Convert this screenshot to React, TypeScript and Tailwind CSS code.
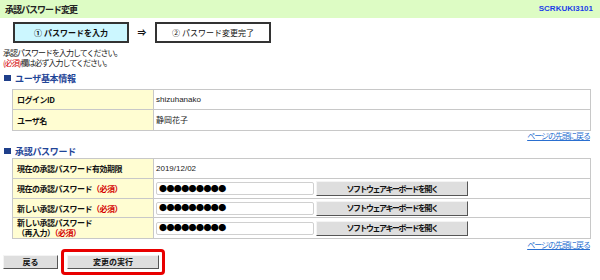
const font = { fontFamily: '"Noto Sans CJK JP", "Noto Sans", sans-serif' };
const latin = { fontFamily: '"Liberation Sans", "Noto Sans CJK JP", sans-serif' };

function Req() {
  return <span className="text-[#d40000]">（必須）</span>;
}

function SectionTitle({ children }: { children: React.ReactNode }) {
  return (
    <div className="flex h-[10px] items-center gap-[4px] pl-[4px] text-[9px] font-bold leading-none tracking-[-0.3px] text-[#1f4597]">
      <span className="inline-block h-[6px] w-[7px] bg-[#1f3f8a]" />
      {children}
    </div>
  );
}

function TopLink() {
  return (
    <div className="flex h-[9px] items-center justify-end pr-[10px] text-[8px] leading-none tracking-[-1px] text-[#2a6fd0] underline">
      ページの先頭に戻る
    </div>
  );
}

function Row({ label, children, h = "h-[20px]" }: { label: React.ReactNode; children: React.ReactNode; h?: string }) {
  return (
    <div className={`flex ${h} border-b border-[#c8c8c8] last:border-b-0`}>
      <div className="flex w-[141px] shrink-0 items-center border-r border-[#c8c8c8] bg-[#fffdd2] pl-[4px] text-[8px] font-bold leading-[9px] tracking-[-0.5px] text-[#111]">
        {label}
      </div>
      <div className="flex flex-1 items-center pl-[2px] text-[8px] text-[#222]">{children}</div>
    </div>
  );
}

function PwInput() {
  return (
    <div className="flex items-center gap-[2px]">
      <div className="flex h-[13px] w-[158px] items-center rounded-[2px] border border-[#d0d0d0] bg-white pl-[2px] text-[8px] leading-none tracking-[-0.6px] text-black">
        ●●●●●●●●●
      </div>
      <div className="flex h-[15px] w-[152px] items-center justify-center border border-[#f4f4f4] border-b-[#555] border-r-[#555] bg-[#dedede] text-[8px] font-bold leading-none tracking-[-1.5px] text-[#111]">
        ソフトウェアキーボードを開く
      </div>
    </div>
  );
}

export default function App() {
  return (
    <div className="h-[280px] w-[600px] overflow-hidden bg-white text-[#111]" style={font}>
      <div className="flex h-[18px] items-center justify-between bg-[#ddfcc4] px-[5px]">
        <span className="text-[9px] font-bold leading-none tracking-[-1px] text-[#222]">承認パスワード変更</span>
        <span className="pr-[2px] text-[8px] font-bold leading-none text-[#1b3ee8]" style={latin}>
          SCRKUKI3101
        </span>
      </div>

      <div className="mt-[4px] flex items-center pl-[13px]">
        <div className="flex h-[21px] w-[116px] items-center justify-center border-2 border-[#333] bg-[#ccf7ff] text-[8px] font-bold leading-none">
          ① パスワードを入力
        </div>
        <div className="flex w-[26px] justify-center text-[9px] font-bold leading-none">⇒</div>
        <div className="flex h-[21px] w-[116px] items-center justify-center border-2 border-[#333] bg-white text-[8px] leading-none">
          ② パスワード変更完了
        </div>
      </div>

      <div className="mt-[5px] h-[20px] pl-[3px] text-[8px] leading-[10px] tracking-[-1px] text-[#222]">
        <div>承認パスワードを入力してください。</div>
        <div>
          <span className="text-[#d40000]">(必須)</span>欄は必ず入力してください。
        </div>
      </div>

      <div className="mt-[5px]">
        <SectionTitle>ユーザ基本情報</SectionTitle>
      </div>

      <div className="ml-[12px] mt-[6px] w-[579px] border border-[#c8c8c8]">
        <Row label="ログインID">
          <span style={latin}>shizuhanako</span>
        </Row>
        <Row label="ユーザ名">
          <span>静岡花子</span>
        </Row>
      </div>

      <TopLink />

      <div className="mt-[6px]">
        <SectionTitle>承認パスワード</SectionTitle>
      </div>

      <div className="ml-[12px] mt-[2px] w-[579px] border border-[#c8c8c8]">
        <Row label="現在の承認パスワード有効期限">
          <span style={latin}>2019/12/02</span>
        </Row>
        <Row label={<span>現在の承認パスワード<Req /></span>}>
          <PwInput />
        </Row>
        <Row label={<span>新しい承認パスワード<Req /></span>} h="h-[19px]">
          <PwInput />
        </Row>
        <Row
          label={
            <span className="block leading-[10px]">
              新しい承認パスワード
              <br />
              （再入力）<Req />
            </span>
          }
        >
          <PwInput />
        </Row>
      </div>

      <div className="mt-[1px]">
        <TopLink />
      </div>

      <div className="flex items-center pl-[3px]">
        <div className="flex h-[14px] w-[55px] items-center justify-center border border-[#f4f4f4] border-b-[#555] border-r-[#555] bg-[#dedede] text-[8px] font-bold leading-none">
          戻る
        </div>
        <div className="ml-[3px] rounded-[4px] border-[3px] border-[#e80000] p-[3px]">
          <div className="flex h-[14px] w-[92px] items-center justify-center border border-[#f4f4f4] border-b-[#555] border-r-[#555] bg-[#dedede] text-[8px] font-bold leading-none">
            変更の実行
          </div>
        </div>
      </div>
    </div>
  );
}
